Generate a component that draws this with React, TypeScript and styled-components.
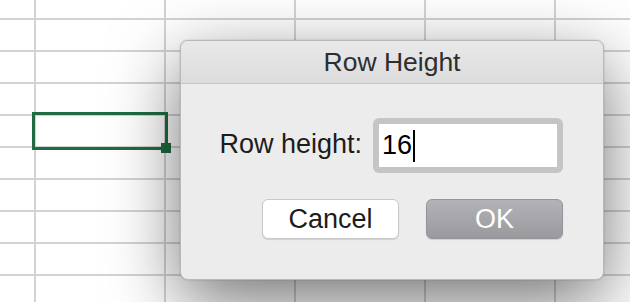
import React from "react";
import styled, { createGlobalStyle } from "styled-components";

const Global = createGlobalStyle`
  html, body { margin: 0; padding: 0; background: #ffffff; }
  body { font-family: "Liberation Sans", Arial, sans-serif; }
  #root { width: 630px; height: 302px; }
`;

const Page = styled.div`
  position: relative;
  width: 630px;
  height: 302px;
  overflow: hidden;
  background: #ffffff;
`;

const Sheet = styled.div`
  display: grid;
  grid-template-columns: 36px repeat(5, 130px);
  grid-template-rows: 20px repeat(9, 32px);
`;

const Cell = styled.div`
  box-sizing: border-box;
  border-right: 2px solid #d3d3d3;
  border-bottom: 2px solid #d3d3d3;
`;

const Selection = styled.div`
  position: absolute;
  left: 32px;
  top: 112px;
  width: 136px;
  height: 38px;
  box-sizing: border-box;
  border: 3px solid #1f6c41;
`;

const Handle = styled.div`
  position: absolute;
  right: -6px;
  bottom: -6px;
  width: 10px;
  height: 10px;
  background: #1f6c41;
`;

const Dialog = styled.div`
  position: absolute;
  left: 180px;
  top: 40px;
  width: 424px;
  height: 240px;
  box-sizing: border-box;
  display: flex;
  flex-direction: column;
  background: #ececec;
  border: 1px solid #b9b9b9;
  border-radius: 8px;
  overflow: hidden;
  box-shadow: 0 22px 70px rgba(0, 0, 0, 0.55), 0 0 2px rgba(0, 0, 0, 0.2);
`;

const TitleBar = styled.div`
  height: 42px;
  flex: none;
  display: flex;
  align-items: center;
  justify-content: center;
  background: linear-gradient(#e9e9e9, #dcdcdc);
  border-bottom: 1px solid #c6c6c6;
  color: #2e2e2e;
  font-size: 26.5px;
`;

const Body = styled.div`
  flex: 1;
  display: flex;
  flex-direction: column;
  align-items: flex-end;
  gap: 26px;
  padding: 34px 40px 0 0;
`;

const FieldRow = styled.div`
  display: flex;
  align-items: center;
  gap: 11px;
`;

const Label = styled.span`
  font-size: 27px;
  color: #1c1c1c;
  margin-top: -2px;
`;

const Ring = styled.div`
  padding: 6px;
  border-radius: 6px;
  background: #c5c5c5;
`;

const Field = styled.div`
  width: 178px;
  height: 43px;
  box-sizing: border-box;
  display: flex;
  align-items: center;
  padding-left: 3px;
  background: #ffffff;
  font-size: 27px;
  color: #000000;
`;

const Caret = styled.span`
  display: inline-block;
  width: 2px;
  height: 32px;
  margin-left: 1px;
  background: #000000;
`;

const ButtonRow = styled.div`
  display: flex;
  gap: 27px;
`;

const Button = styled.div<{ $primary?: boolean }>`
  width: 137px;
  height: 40px;
  box-sizing: border-box;
  display: flex;
  align-items: center;
  justify-content: center;
  border-radius: 6px;
  font-size: 27px;
  border: 1px solid ${(p) => (p.$primary ? "#95949a" : "#c9c9c9")};
  background: ${(p) =>
    p.$primary ? "linear-gradient(#b3b2b7, #9a999e)" : "#ffffff"};
  color: ${(p) => (p.$primary ? "#ffffff" : "#1c1c1c")};
  box-shadow: 0 1px 1px rgba(0, 0, 0, 0.12);
`;

export default function App() {
  const cells = Array.from({ length: 60 }, (_, i) => <Cell key={i} />);
  return (
    <Page>
      <Global />
      <Sheet>{cells}</Sheet>
      <Selection>
        <Handle />
      </Selection>
      <Dialog>
        <TitleBar>Row Height</TitleBar>
        <Body>
          <FieldRow>
            <Label>Row height:</Label>
            <Ring>
              <Field>
                16
                <Caret />
              </Field>
            </Ring>
          </FieldRow>
          <ButtonRow>
            <Button>Cancel</Button>
            <Button $primary>OK</Button>
          </ButtonRow>
        </Body>
      </Dialog>
    </Page>
  );
}
